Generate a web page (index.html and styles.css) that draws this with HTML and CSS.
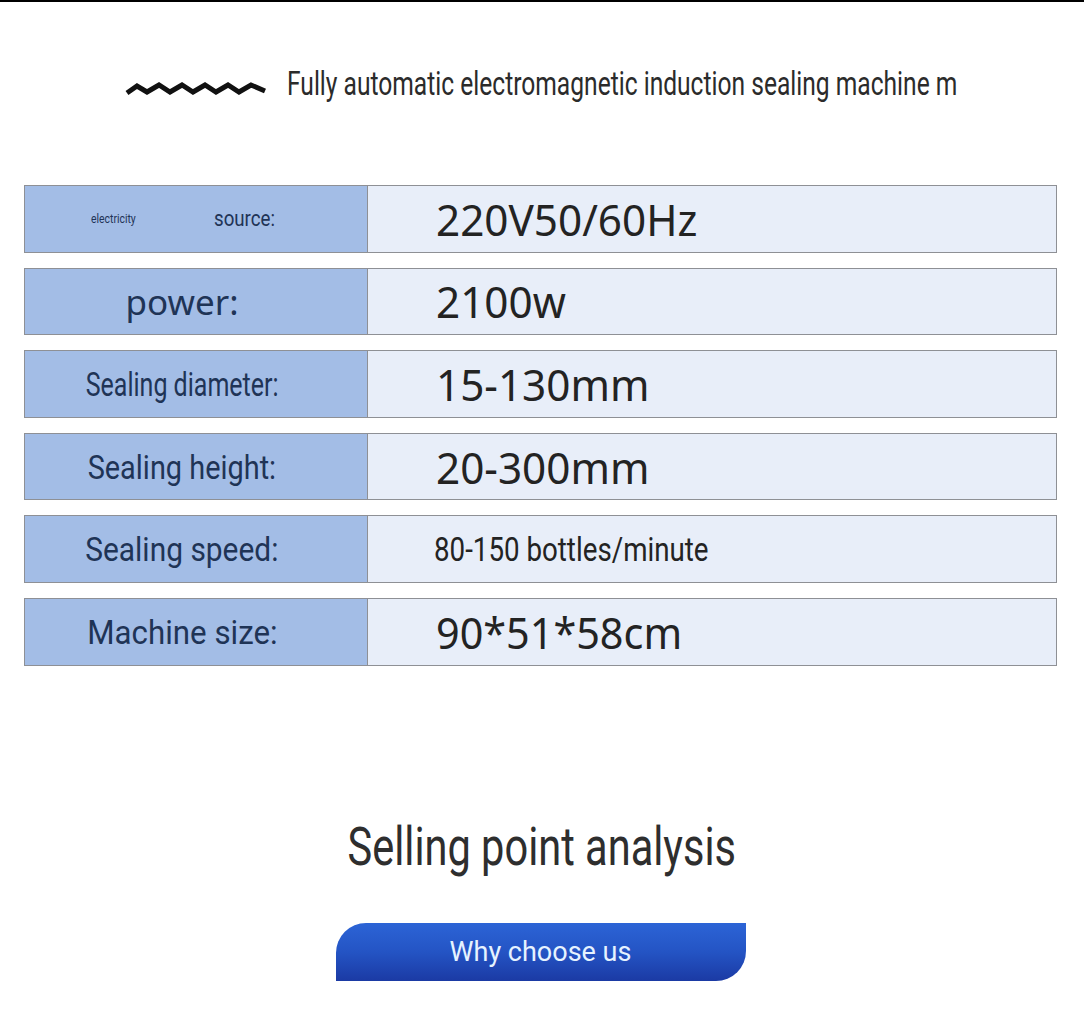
FILE: index.html
```html
<!DOCTYPE html>
<html>
<head>
<meta charset="utf-8">
<link rel="stylesheet" href="styles.css">
</head>
<body>
<div class="page">
  <header class="head">
    <svg class="wave" width="142" height="16" viewBox="0 0 142 16">
      <path d="M2 12 L12 5 L22 11 L34 4 L45 11 L57 4 L68 11 L80 4 L91 11 L103 4 L114 11 L126 4 L140 10" fill="none" stroke="#111" stroke-width="5" stroke-linejoin="miter"/>
    </svg>
    <span class="title">Fully automatic electromagnetic induction sealing machine m</span>
  </header>

  <section class="specs">
    <div class="row">
      <div class="label split"><span class="tiny">electricity</span><span class="cond src">source:</span></div>
      <div class="value"><span class="val">220V50/60Hz</span></div>
    </div>
    <div class="row">
      <div class="label"><span class="plain">power:</span></div>
      <div class="value"><span class="val">2100w</span></div>
    </div>
    <div class="row">
      <div class="label"><span class="cond k1">Sealing diameter:</span></div>
      <div class="value"><span class="val">15-130mm</span></div>
    </div>
    <div class="row">
      <div class="label"><span class="cond k2">Sealing height:</span></div>
      <div class="value"><span class="val">20-300mm</span></div>
    </div>
    <div class="row">
      <div class="label"><span class="cond k3">Sealing speed:</span></div>
      <div class="value"><span class="val small">80-150 bottles/minute</span></div>
    </div>
    <div class="row">
      <div class="label"><span class="cond k4">Machine size:</span></div>
      <div class="value"><span class="val v6">90*51*58cm</span></div>
    </div>
  </section>

  <h2 class="selling"><span>Selling point analysis</span></h2>

  <div class="btn-wrap">
    <div class="btn">Why choose us</div>
  </div>
</div>
</body>
</html>
```

FILE: styles.css
```css
html, body {
  margin: 0;
  padding: 0;
  background: #ffffff;
}
body {
  font-family: Roboto, "Liberation Sans", sans-serif;
  width: 1084px;
  height: 1036px;
  overflow: hidden;
}
.page {
  border-top: 2px solid #000;
  height: 1034px;
}
.head {
  display: flex;
  align-items: center;
  height: 60px;
  margin-top: 51px;
  padding-left: 125px;
}
.wave {
  display: block;
  margin-top: 12px;
  flex: none;
}
.title {
  display: inline-block;
  margin-left: 20px;
  font-size: 33px;
  color: #2b2b2b;
  white-space: nowrap;
  transform: scaleX(0.745);
  transform-origin: left center;
}
.specs {
  display: flex;
  flex-direction: column;
  gap: 15px;
  margin: 72px 0 0 24px;
  width: 1033px;
}
.row {
  display: flex;
  height: 67.6px;
  border: 1.5px solid #8e9095;
  box-sizing: border-box;
}
.label {
  width: 343px;
  flex: none;
  box-sizing: border-box;
  background: #a3bde6;
  border-right: 1.5px solid #8e9095;
  display: flex;
  align-items: center;
  justify-content: center;
  padding-right: 28px;
  color: #1f3456;
}
.label.split {
  justify-content: flex-start;
  padding-left: 66px;
  padding-right: 0;
}
.tiny {
  display: inline-block;
  font-size: 13px;
  transform: scaleX(0.8);
  transform-origin: left center;
  width: 56px;
  margin-right: 67px;
}
.cond {
  display: inline-block;
  font-size: 34px;
  white-space: nowrap;
}
.k1 { transform: scaleX(0.735); }
.k2 { transform: scaleX(0.85); }
.k3 { transform: scaleX(0.88); }
.k4 { transform: scaleX(0.92); }
.cond.src {
  font-size: 22px;
  transform: scaleX(0.85);
  transform-origin: left center;
}
.plain {
  font-family: "Noto Sans", sans-serif;
  font-size: 35px;
}
.value {
  flex: 1;
  background: #e8eef9;
  display: flex;
  align-items: center;
  padding-left: 68px;
  color: #232323;
}
.val {
  display: inline-block;
  font-family: "Noto Sans", sans-serif;
  font-size: 44px;
  white-space: nowrap;
  transform: scaleX(0.96);
  transform-origin: left center;
}
.val.v6 {
  transform: scaleX(0.94);
}
.val.small {
  font-family: Roboto, sans-serif;
  font-size: 33px;
  transform: scaleX(0.84);
  margin-left: -2px;
}
.selling {
  margin: 151px 0 0;
  text-align: center;
  font-weight: 400;
  font-size: 53px;
  color: #2e2e2e;
  line-height: 60px;
}
.selling span {
  display: inline-block;
  transform: scaleX(0.784);
}
.btn-wrap {
  display: flex;
  justify-content: center;
  margin-top: 46px;
}
.btn {
  width: 410px;
  height: 58px;
  margin-left: -3px;
  box-sizing: border-box;
  border-radius: 30px 0 30px 0;
  background: linear-gradient(180deg, #2c64d6 0%, #2454c4 50%, #1b3aa4 100%);
  color: #e6f3ff;
  font-size: 27px;
  display: flex;
  align-items: center;
  justify-content: center;
}
```
